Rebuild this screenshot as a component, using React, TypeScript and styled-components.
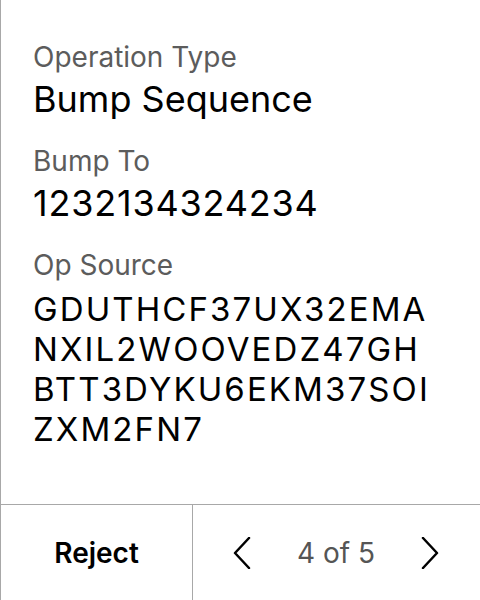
import React from "react";
import styled, { createGlobalStyle } from "styled-components";

const Global = createGlobalStyle`
  html, body { margin: 0; padding: 0; background: #fff; }
  body { font-family: Inter, "Noto Sans", sans-serif; }
`;

const Screen = styled.div`
  width: 480px;
  height: 600px;
  box-sizing: border-box;
  border-left: 1px solid #a8a8a8;
  display: flex;
  flex-direction: column;
  background: #fff;
`;

const Content = styled.div`
  flex: 1;
  padding: 39px 0 0 32px;
  display: flex;
  flex-direction: column;
  gap: 20px;
`;

const Field = styled.div`
  display: flex;
  flex-direction: column;
`;

const Label = styled.div`
  font-size: 28px;
  line-height: 36px;
  color: #5c5c5c;
`;

const Value = styled.div<{ $numeric?: boolean }>`
  font-size: 36px;
  line-height: 48px;
  letter-spacing: ${(p) => (p.$numeric ? "0.8px" : "0")};
  color: #000;
`;

const Address = styled.div`
  margin-top: 6px;
  display: flex;
  flex-direction: column;
  font-size: 33px;
  line-height: 40px;
  letter-spacing: 2.1px;
  color: #000;
`;

const AddressLine = styled.span`
  white-space: nowrap;
`;

const Footer = styled.div`
  height: 96px;
  box-sizing: border-box;
  border-top: 1px solid #a8a8a8;
  display: flex;
`;

const RejectButton = styled.button`
  width: 192px;
  border: none;
  border-right: 1px solid #a8a8a8;
  background: transparent;
  font-family: inherit;
  font-size: 28px;
  font-weight: 600;
  color: #000;
  padding: 0;
`;

const Pager = styled.div`
  flex: 1;
  display: flex;
  align-items: center;
  justify-content: space-between;
  padding: 0 38px 0 37px;
`;

const NavButton = styled.button`
  border: none;
  background: transparent;
  padding: 0;
  width: 24px;
  height: 36px;
  display: flex;
  align-items: center;
  justify-content: center;
`;

const Count = styled.span`
  font-size: 28px;
  color: #555;
`;

const Chevron = ({ dir }: { dir: "left" | "right" }) => (
  <svg width="20" height="32" viewBox="0 0 20 32" fill="none">
    <path
      d={dir === "left" ? "M17 1 L3 16 L17 31" : "M3 1 L17 16 L3 31"}
      stroke="#000"
      strokeWidth="2.5"
      strokeLinecap="round"
      strokeLinejoin="round"
    />
  </svg>
);

const SOURCE = "GDUTHCF37UX32EMANXIL2WOOVEDZ47GHBTT3DYKU6EKM37SOIZXM2FN7";
const BREAKS = [16, 32, 49, SOURCE.length];

export default function App() {
  const lines = BREAKS.map((end, i) => SOURCE.slice(i === 0 ? 0 : BREAKS[i - 1], end));
  return (
    <>
      <Global />
      <Screen>
        <Content>
          <Field>
            <Label>Operation Type</Label>
            <Value>Bump Sequence</Value>
          </Field>
          <Field>
            <Label>Bump To</Label>
            <Value $numeric>1232134324234</Value>
          </Field>
          <Field>
            <Label>Op Source</Label>
            <Address>
              {lines.map((l) => (
                <AddressLine key={l}>{l}</AddressLine>
              ))}
            </Address>
          </Field>
        </Content>
        <Footer>
          <RejectButton>Reject</RejectButton>
          <Pager>
            <NavButton aria-label="previous">
              <Chevron dir="left" />
            </NavButton>
            <Count>4 of 5</Count>
            <NavButton aria-label="next">
              <Chevron dir="right" />
            </NavButton>
          </Pager>
        </Footer>
      </Screen>
    </>
  );
}
